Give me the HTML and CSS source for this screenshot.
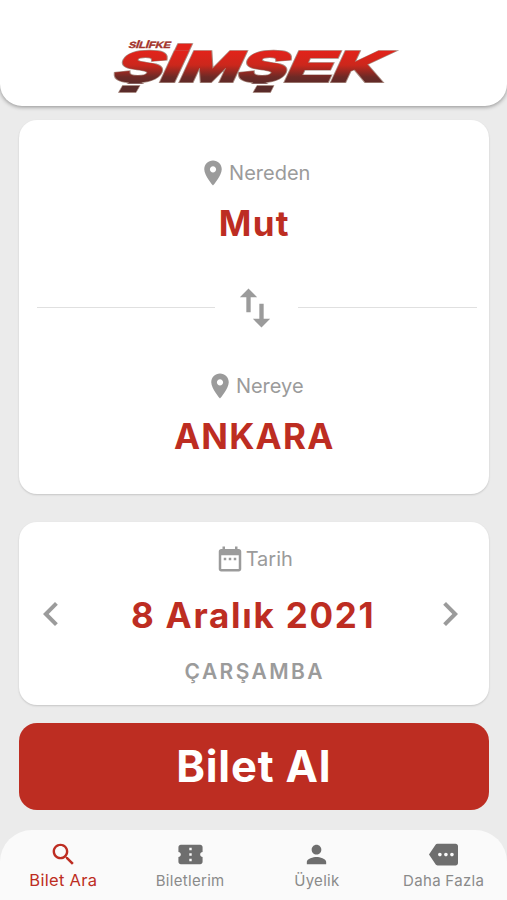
FILE: index.html
```html
<!DOCTYPE html>
<html lang="tr">
<head>
    <meta charset="UTF-8">
    <meta name="viewport" content="width=device-width, initial-scale=1.0">
    <title>Silifke Şimşek</title>
    <link rel="stylesheet" href="styles.css">
</head>
<body>

<header class="header">
    <svg class="logo" width="290" height="62" viewBox="0 0 290 62" role="img" aria-label="Silifke Şimşek">
        <defs>
            <linearGradient id="kirmizi" gradientUnits="userSpaceOnUse" x1="0" y1="-40" x2="0" y2="10">
                <stop offset="0.2" stop-color="#e2231a"/>
                <stop offset="0.48" stop-color="#cc271c"/>
                <stop offset="0.72" stop-color="#6d2a26"/>
                <stop offset="1" stop-color="#4a2a2a"/>
            </linearGradient>
        </defs>
        <g transform="translate(2.5 45) skewX(-25)">
            <text class="logo-name logo-edge" x="0" y="0" textLength="268" lengthAdjust="spacingAndGlyphs">ŞİMŞEK</text>
            <text class="logo-name" x="0" y="0" textLength="268" lengthAdjust="spacingAndGlyphs">ŞİMŞEK</text>
        </g>
        <path class="logo-gap" d="M4 47.8H44V61H4zM136 47.8H180V61H136z"/>
        <path class="logo-tail" d="M13.5 49.5H31L27 56.5H9.5zM148 49.5H165L161.5 56.5H144z"/>
        <g transform="translate(19 12) skewX(-18)">
            <text class="logo-city" x="0" y="0" textLength="42" lengthAdjust="spacingAndGlyphs">SİLİFKE</text>
        </g>
    </svg>
</header>

<main class="content">
    <section class="card route">
        <div class="stop">
            <div class="label">
                <svg class="icon" viewBox="0 0 24 24"><path d="M12 2C8.13 2 5 5.13 5 9c0 5.25 7 13 7 13s7-7.75 7-13c0-3.87-3.13-7-7-7zm0 9.5c-1.38 0-2.5-1.12-2.5-2.5s1.12-2.5 2.5-2.5 2.5 1.12 2.5 2.5-1.12 2.5-2.5 2.5z"/></svg>
                <span>Nereden</span>
            </div>
            <div class="value">Mut</div>
        </div>

        <div class="divider">
            <span class="line"></span>
            <svg class="swap" viewBox="0 0 24 24"><path d="M9 3L5 6.99h3V14h2V6.99h3L9 3zm7 14.01V10h-2v7.01h-3L15 21l4-3.99h-3z"/></svg>
            <span class="line"></span>
        </div>

        <div class="stop">
            <div class="label">
                <svg class="icon" viewBox="0 0 24 24"><path d="M12 2C8.13 2 5 5.13 5 9c0 5.25 7 13 7 13s7-7.75 7-13c0-3.87-3.13-7-7-7zm0 9.5c-1.38 0-2.5-1.12-2.5-2.5s1.12-2.5 2.5-2.5 2.5 1.12 2.5 2.5-1.12 2.5-2.5 2.5z"/></svg>
                <span>Nereye</span>
            </div>
            <div class="value">ANKARA</div>
        </div>
    </section>

    <section class="card date">
        <div class="label">
            <svg class="icon" viewBox="0 0 24 24"><path d="M9 11H7v2h2v-2zm4 0h-2v2h2v-2zm4 0h-2v2h2v-2zm2-7h-1V2h-2v2H8V2H6v2H5c-1.11 0-1.99.9-1.99 2L3 20c0 1.1.89 2 2 2h14c1.1 0 2-.9 2-2V6c0-1.1-.9-2-2-2zm0 16H5V9h14v11z"/></svg>
            <span>Tarih</span>
        </div>
        <div class="picker">
            <svg class="arrow" viewBox="0 0 24 24"><path d="M15.41 7.41L14 6l-6 6 6 6 1.41-1.41L10.83 12z"/></svg>
            <div class="value value-date">8 Aralık 2021</div>
            <svg class="arrow" viewBox="0 0 24 24"><path d="M10 6L8.59 7.41 13.17 12l-4.58 4.59L10 18l6-6z"/></svg>
        </div>
        <div class="day">ÇARŞAMBA</div>
    </section>

    <button class="buy">Bilet Al</button>
</main>

<nav class="tabs">
    <a class="tab active">
        <svg viewBox="0 0 24 24"><path d="M15.5 14h-.79l-.28-.27C15.41 12.59 16 11.11 16 9.5 16 5.91 13.09 3 9.5 3S3 5.91 3 9.5 5.91 16 9.5 16c1.61 0 3.09-.59 4.23-1.57l.27.28v.79l5 4.99L20.49 19l-4.99-5zm-6 0C7.01 14 5 11.99 5 9.5S7.01 5 9.5 5 14 7.01 14 9.5 11.99 14 9.5 14z"/></svg>
        <span>Bilet Ara</span>
    </a>
    <a class="tab">
        <svg viewBox="0 0 24 24"><path d="M22 10V6c0-1.11-.9-2-2-2H4c-1.1 0-1.99.89-1.99 2v4c1.1 0 1.99.9 1.99 2s-.89 2-2 2v4c0 1.1.9 2 2 2h16c1.1 0 2-.9 2-2v-4c-1.1 0-2-.9-2-2s.9-2 2-2zm-9 7.5h-2v-2h2v2zm0-4.5h-2v-2h2v2zm0-4.5h-2v-2h2v2z"/></svg>
        <span>Biletlerim</span>
    </a>
    <a class="tab">
        <svg viewBox="0 0 24 24"><path d="M12 12c2.21 0 4-1.79 4-4s-1.79-4-4-4-4 1.79-4 4 1.79 4 4 4zm0 2c-2.67 0-8 1.34-8 4v2h16v-2c0-2.66-5.33-4-8-4z"/></svg>
        <span>Üyelik</span>
    </a>
    <a class="tab">
        <svg viewBox="0 0 24 24"><path d="M22 3H7c-.69 0-1.23.35-1.59.88L0 12l5.41 8.11c.36.53.97.89 1.66.89H22c1.1 0 2-.9 2-2V5c0-1.1-.9-2-2-2zM9 13.5c-.83 0-1.5-.67-1.5-1.5s.67-1.5 1.5-1.5 1.5.67 1.5 1.5-.67 1.5-1.5 1.5zm5 0c-.83 0-1.5-.67-1.5-1.5s.67-1.5 1.5-1.5 1.5.67 1.5 1.5-.67 1.5-1.5 1.5zm5 0c-.83 0-1.5-.67-1.5-1.5s.67-1.5 1.5-1.5 1.5.67 1.5 1.5-.67 1.5-1.5 1.5z"/></svg>
        <span>Daha Fazla</span>
    </a>
</nav>

</body>
</html>
```
FILE: styles.css
```css
* {
    box-sizing: border-box;
}
body {
    margin: 0;
    height: 900px;
    display: flex;
    flex-direction: column;
    overflow: hidden;
    background-color: #ebebeb;
    font-family: Inter, "Liberation Sans", sans-serif;
}
svg {
    display: block;
    flex: none;
    fill: currentColor;
}
.header {
    height: 106px;
    padding-top: 36px;
    display: flex;
    justify-content: center;
    background-color: #fff;
    border-radius: 0 0 22px 22px;
    box-shadow: 0 1px 4px rgba(0, 0, 0, 0.4);
}
.logo {
    overflow: visible;
}
.logo-name {
    font-family: "Liberation Sans", Arial, sans-serif;
    font-size: 42px;
    font-weight: 700;
    fill: url(#kirmizi);
    stroke: url(#kirmizi);
    stroke-width: 2.6px;
}
.logo-edge {
    stroke: #a98a80;
    stroke-width: 3.8px;
}
.logo-gap {
    fill: #fff;
}
.logo-tail {
    fill: #5a2b29;
    stroke: #a98a80;
    stroke-width: 0.7px;
}
.logo-city {
    font-family: "Liberation Sans", Arial, sans-serif;
    font-size: 9px;
    font-weight: 700;
    fill: #a3332b;
    stroke: #a3332b;
    stroke-width: 0.4px;
}
.content {
    flex: 1;
    padding: 14px 18px 0 18.5px;
}
.card {
    background-color: #fff;
    border-radius: 18px;
    box-shadow: 0 1px 2px rgba(0, 0, 0, 0.16);
}
.route {
    height: 374px;
    padding: 38px 12px 0 18px;
}
.stop {
    padding-right: 5px;
}
.label {
    height: 30px;
    display: flex;
    justify-content: center;
    align-items: center;
    gap: 1px;
    color: #9b9b9b;
    font-size: 20px;
}
.icon {
    width: 30px;
    height: 30px;
}
.value {
    height: 44px;
    line-height: 44px;
    text-align: center;
    color: #bd2d22;
    font-size: 35px;
    font-weight: 700;
    letter-spacing: 1.2px;
}
.stop .value {
    margin-top: 13px;
}
.divider {
    height: 52px;
    margin: 36px 0 38px;
    display: flex;
    align-items: center;
}
.line {
    width: 179px;
    height: 1px;
    background-color: #e0e0e0;
}
.swap {
    width: 52px;
    height: 52px;
    margin: 1px 17px 0 14px;
    color: #9b9b9b;
}
.date {
    height: 182.5px;
    margin-top: 28px;
    padding-top: 22px;
}
.picker {
    height: 48px;
    margin-top: 16px;
    padding: 0 15px 0 8px;
    display: flex;
    justify-content: space-between;
    align-items: center;
}
.value-date {
    height: 48px;
    line-height: 51px;
    padding-left: 6px;
    letter-spacing: 1.75px;
}
.arrow {
    width: 48px;
    height: 48px;
    color: #9b9b9b;
}
.day {
    margin-top: 21px;
    padding-left: 2px;
    line-height: 26px;
    text-align: center;
    color: #9b9b9b;
    font-size: 21px;
    font-weight: 600;
    letter-spacing: 2.4px;
}
.buy {
    display: block;
    width: 100%;
    height: 87px;
    margin-top: 18.5px;
    padding: 0 0 2px;
    border: none;
    border-radius: 18px;
    background-color: #bd2d22;
    color: #fff;
    font-family: inherit;
    font-size: 43.5px;
    font-weight: 700;
    letter-spacing: 0.8px;
    cursor: pointer;
}
.tabs {
    height: 70px;
    padding-top: 10px;
    display: flex;
    background-color: #fafafa;
    border-radius: 32px 32px 0 0;
}
.tab {
    flex: 1;
    display: flex;
    flex-direction: column;
    align-items: center;
    color: #8a8a8a;
    font-size: 15px;
    letter-spacing: 0.3px;
}
.tab svg {
    width: 29px;
    height: 29px;
    color: #6e6e6e;
}
.tab span {
    line-height: 24px;
}
.tab.active,
.tab.active svg {
    color: #bd2d22;
}
.tab.active {
    font-size: 16.5px;
}
.tab.active span {
    line-height: 22px;
}
```
